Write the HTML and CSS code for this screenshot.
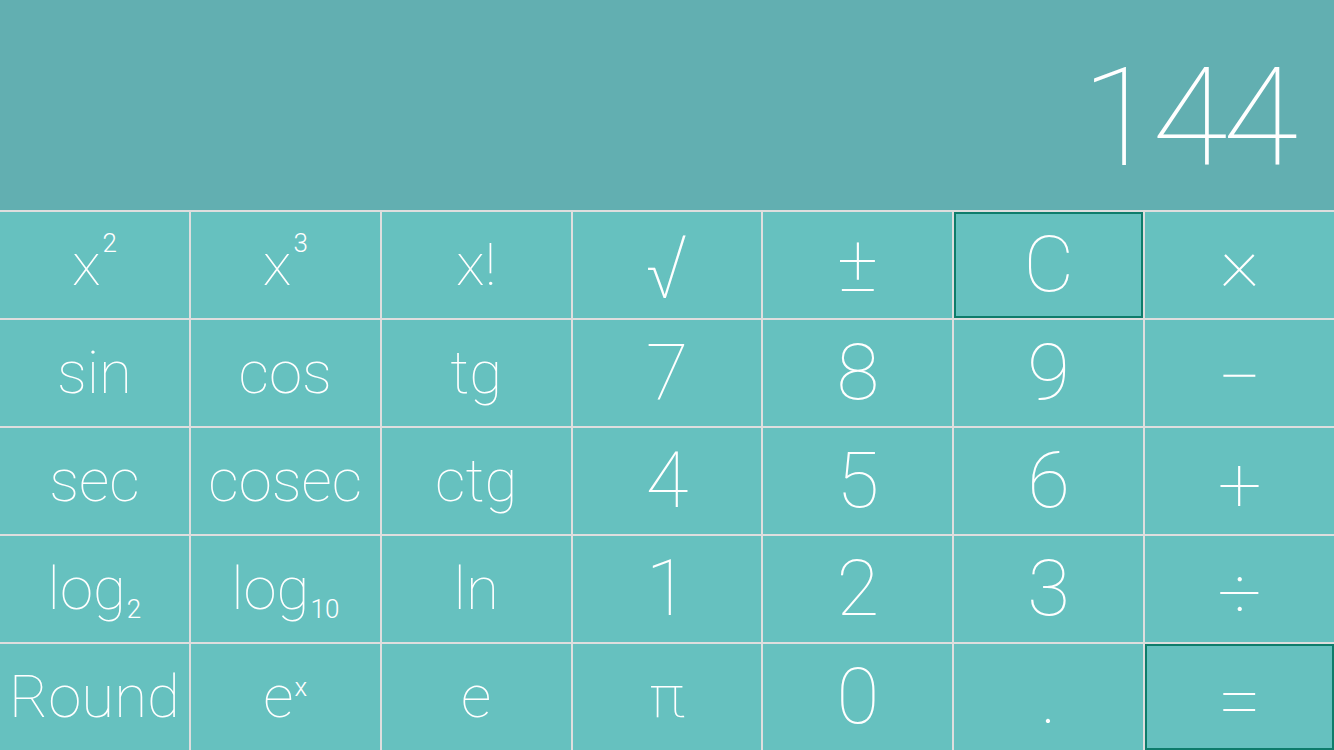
FILE: index.html
```
<!DOCTYPE html>
<html lang="en">
<head>
<meta charset="utf-8">
<title>Calculator</title>
<link rel="stylesheet" href="styles.css">
</head>
<body>
<div class="calc">
  <div class="display"><span class="value">144</span></div>
  <div class="keys">
    <div class="key fn"><span>x<sup class="pow">2</sup></span></div>
    <div class="key fn"><span>x<sup class="pow">3</sup></span></div>
    <div class="key fn"><span>x!</span></div>
    <div class="key op root"><span>√</span></div>
    <div class="key op"><span>±</span></div>
    <div class="key num accent"><span>C</span></div>
    <div class="key op times"><span>×</span></div>

    <div class="key fn"><span>sin</span></div>
    <div class="key fn"><span>cos</span></div>
    <div class="key fn"><span>tg</span></div>
    <div class="key num"><span>7</span></div>
    <div class="key num"><span>8</span></div>
    <div class="key num"><span>9</span></div>
    <div class="key op low"><span>−</span></div>

    <div class="key fn"><span>sec</span></div>
    <div class="key fn"><span>cosec</span></div>
    <div class="key fn"><span>ctg</span></div>
    <div class="key num"><span>4</span></div>
    <div class="key num"><span>5</span></div>
    <div class="key num"><span>6</span></div>
    <div class="key op low"><span>+</span></div>

    <div class="key fn"><span>log<sub>2</sub></span></div>
    <div class="key fn"><span>log<sub>10</sub></span></div>
    <div class="key fn"><span>ln</span></div>
    <div class="key num"><span>1</span></div>
    <div class="key num"><span>2</span></div>
    <div class="key num"><span>3</span></div>
    <div class="key op low"><span>÷</span></div>

    <div class="key fn"><span>Round</span></div>
    <div class="key fn"><span>e<sup class="ex">x</sup></span></div>
    <div class="key fn"><span>e</span></div>
    <div class="key fn"><span>π</span></div>
    <div class="key num"><span>0</span></div>
    <div class="key num"><span>.</span></div>
    <div class="key op low accent"><span>=</span></div>
  </div>
</div>
</body>
</html>
```
FILE: styles.css
```
html, body {
  margin: 0;
  padding: 0;
  width: 1334px;
  height: 750px;
  overflow: hidden;
  background: #dedede;
}
.calc {
  width: 1334px;
  height: 750px;
  display: flex;
  flex-direction: column;
  font-family: "Roboto", "Liberation Sans", sans-serif;
  font-weight: 100;
  color: #ffffff;
}
.display {
  height: 210px;
  flex: none;
  background: #62afb1;
  display: flex;
  justify-content: flex-end;
  align-items: center;
  padding: 26px 41px 0 0;
  box-sizing: border-box;
}
.value {
  font-size: 138px;
  line-height: 1;
  letter-spacing: -5px;
}
.keys {
  flex: 1;
  display: grid;
  grid-template-columns: repeat(7, 1fr);
  grid-template-rows: repeat(5, 1fr);
  gap: 2px;
  padding-top: 2px;
  background: #dedede;
}
.key {
  background: #66c1bf;
  display: flex;
  align-items: center;
  justify-content: center;
  line-height: 1;
  white-space: nowrap;
  box-sizing: border-box;
}
.fn { font-size: 60px; }
.num { font-size: 78px; }
.op { font-size: 78px; }
.op.root { font-size: 88px; padding-top: 6px; }
.op.times { padding-bottom: 10px; }
.op.low { padding-top: 10px; }
.accent {
  border: 2px solid #0e7c6b;
}
sup, sub {
  font-size: 26px;
  font-weight: 300;
  line-height: 0;
}
sup.pow {
  vertical-align: 33px;
  margin-left: 2px;
}
sup.ex {
  vertical-align: 21px;
  margin-left: 1px;
}
sub {
  vertical-align: -9px;
  margin-left: 1px;
}
```
